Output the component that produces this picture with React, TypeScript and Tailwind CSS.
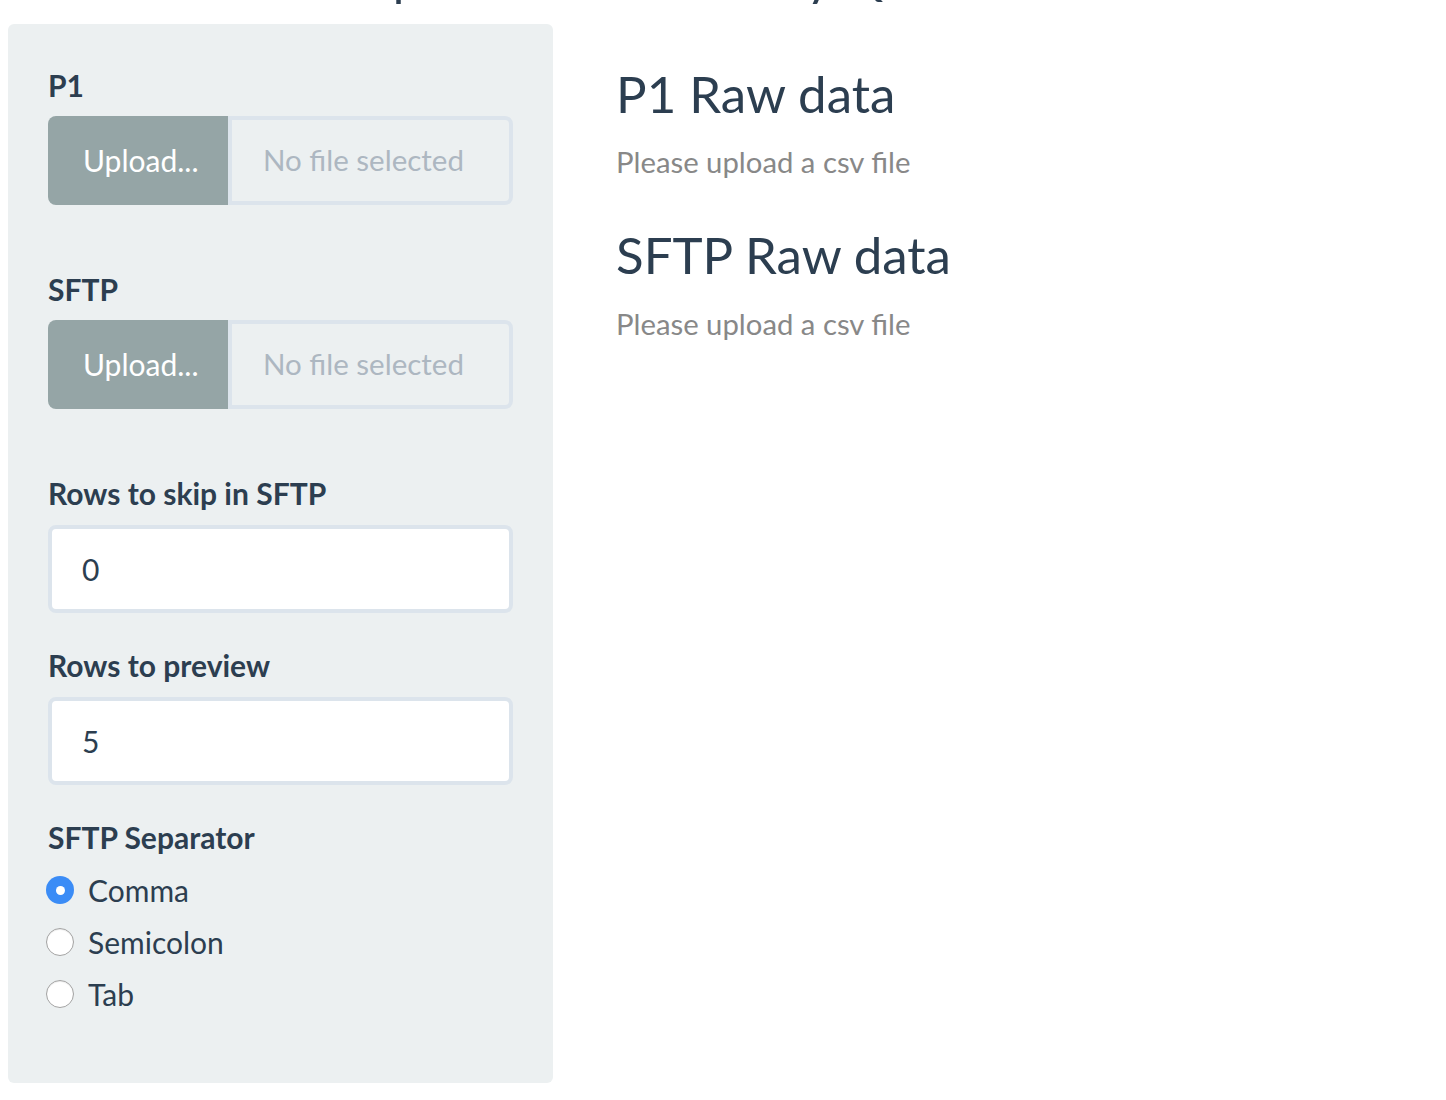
import React from "react";

const labelCls = "block text-[30px] leading-[40px] font-bold text-[#2c3e50]";

function Upload({ top }: { top: string }) {
  return (
    <div className={`flex h-[89px] ${top}`}>
      <div className="w-[180px] h-full bg-[#95a5a6] rounded-l-[8px] flex items-center pl-[35px] text-white text-[30px]">
        Upload...
      </div>
      <div className="flex-1 h-full border-[4px] border-[#dce4ec] rounded-r-[8px] flex items-center pl-[31px] text-[29.5px] text-[#adb7c1]">
        No file selected
      </div>
    </div>
  );
}

function NumInput({ value }: { value: string }) {
  return (
    <div className="h-[88px] bg-white border-[4px] border-[#dce4ec] rounded-[8px] flex items-center pl-[30px] text-[30px] text-[#2c3e50]">
      {value}
    </div>
  );
}

function Radio({ label, checked }: { label: string; checked?: boolean }) {
  return (
    <div className="h-[52px] flex items-center -ml-[2px]">
      {checked ? (
        <div className="w-[28px] h-[28px] rounded-full bg-[#3b8cf6] flex items-center justify-center">
          <div className="w-[9px] h-[9px] rounded-full bg-white" />
        </div>
      ) : (
        <div className="w-[28px] h-[28px] rounded-full bg-white border border-[#a3a3a3] shadow-[inset_0_1px_1px_rgba(0,0,0,0.08)]" />
      )}
      <span className="ml-[14px] text-[30px] text-[#2c3e50]">{label}</span>
    </div>
  );
}

export default function App() {
  return (
    <div
      className="min-h-[1100px] bg-white pl-[8px]"
      style={{ fontFamily: "Lato, 'Open Sans', sans-serif" }}
    >
      <div className="h-[24px] overflow-hidden">
        <h2 className="-mt-[49px] text-[50px] leading-[50px] font-normal text-[#2c3e50] whitespace-nowrap">
          P1 and SFTP comparison overview by Quarter
        </h2>
      </div>
      <div className="flex items-start">
        <div className="w-[545px] bg-[#ecf0f1] rounded-[6px] pt-[41px] pb-[63px] px-[40px]">
          <label className={labelCls}>P1</label>
          <Upload top="mt-[11px]" />
          <label className={`${labelCls} mt-[64px]`}>SFTP</label>
          <Upload top="mt-[11px]" />
          <label className={`${labelCls} mt-[64px] mb-[12px]`}>Rows to skip in SFTP</label>
          <NumInput value="0" />
          <label className={`${labelCls} mt-[32px] mb-[12px]`}>Rows to preview</label>
          <NumInput value="5" />
          <label className={`${labelCls} mt-[32px]`}>SFTP Separator</label>
          <div className="mt-[7px]">
            <Radio label="Comma" checked />
            <Radio label="Semicolon" />
            <Radio label="Tab" />
          </div>
        </div>
        <div className="pl-[63px] pt-[42px]">
          <h3 className="text-[51px] leading-[56px] font-normal text-[#2c3e50]">P1 Raw data</h3>
          <p className="mt-[20px] text-[29.3px] leading-[40px] text-[#888888]">Please upload a csv file</p>
          <h3 className="mt-[45px] text-[51px] leading-[56px] font-normal text-[#2c3e50]">SFTP Raw data</h3>
          <p className="mt-[21px] text-[29.3px] leading-[40px] text-[#888888]">Please upload a csv file</p>
        </div>
      </div>
    </div>
  );
}
